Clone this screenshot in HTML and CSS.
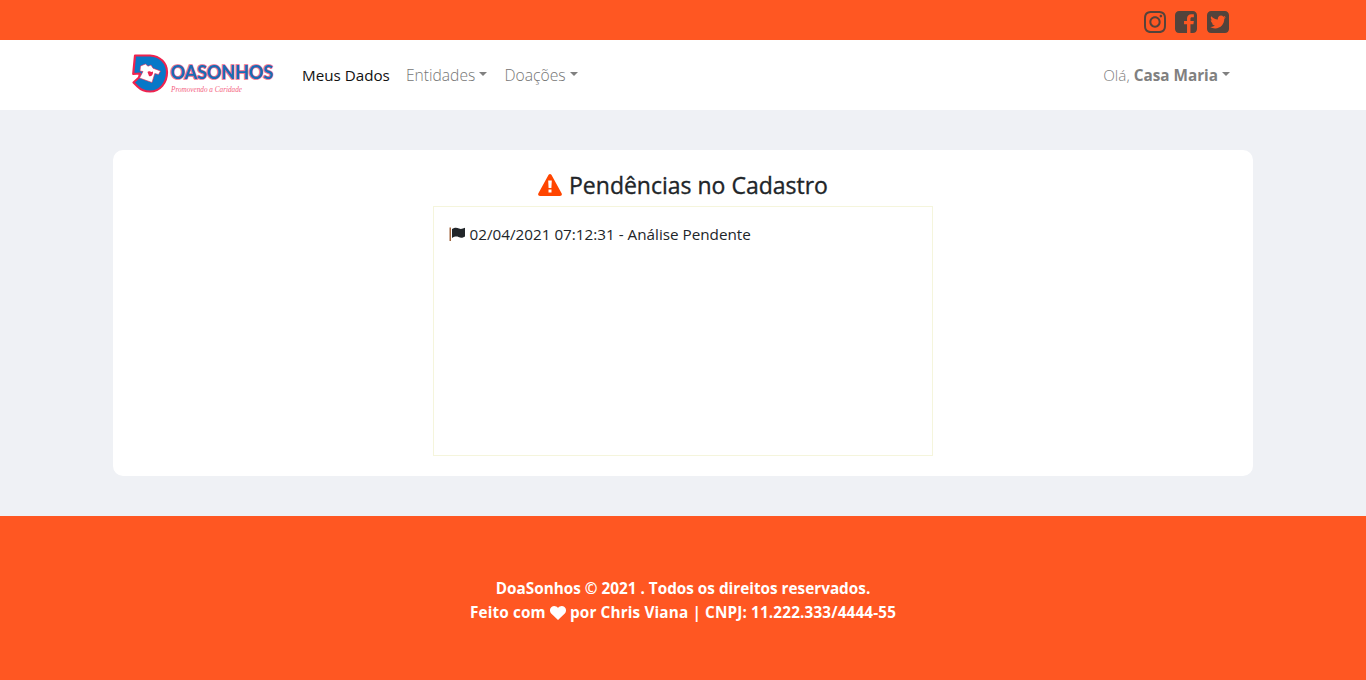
FILE: index.html
```html
<!DOCTYPE html>
<html lang="pt-BR">
<head>
<meta charset="utf-8">
<title>DoaSonhos</title>
<link rel="stylesheet" href="styles.css">
</head>
<body>
<div class="topbar">
  <div class="social">
    <svg viewBox="0 32 448 448"><path d="M224.1 141c-63.6 0-114.9 51.3-114.9 114.9s51.3 114.9 114.9 114.9S339 319.5 339 255.9 287.7 141 224.1 141zm0 189.6c-41.1 0-74.7-33.5-74.7-74.7s33.5-74.7 74.7-74.7 74.7 33.5 74.7 74.7-33.6 74.7-74.7 74.7zm146.4-194.3c0 14.9-12 26.8-26.8 26.8-14.9 0-26.8-12-26.8-26.8s12-26.8 26.8-26.8 26.8 12 26.8 26.8zm76.1 27.2c-1.7-35.9-9.9-67.7-36.2-93.9-26.2-26.2-58-34.4-93.9-36.2-37-2.1-147.9-2.1-184.9 0-35.8 1.7-67.6 9.9-93.9 36.1s-34.4 58-36.2 93.9c-2.1 37-2.1 147.9 0 184.9 1.7 35.9 9.9 67.7 36.2 93.9s58 34.4 93.9 36.2c37 2.1 147.9 2.1 184.9 0 35.9-1.7 67.7-9.9 93.9-36.2 26.2-26.2 34.4-58 36.2-93.9 2.1-37 2.1-147.8 0-184.8zM398.8 388c-7.8 19.6-22.9 34.7-42.6 42.6-29.5 11.7-99.5 9-132.1 9s-102.7 2.6-132.1-9c-19.6-7.8-34.7-22.9-42.6-42.6-11.7-29.5-9-99.5-9-132.1s-2.6-102.7 9-132.1c7.8-19.6 22.9-34.7 42.6-42.6 29.5-11.7 99.5-9 132.1-9s102.7-2.6 132.1 9c19.6 7.8 34.7 22.9 42.6 42.6 11.7 29.5 9 99.5 9 132.1s2.7 102.7-9 132.1z"/></svg>
    <svg viewBox="0 32 448 448"><path d="M448 116v280c0 46-38 84-84 84h-49.300V302.800h60.600l8.700-67.600h-69.300V192c0-19.600 5.400-32.900 33.500-32.900H384V98.700c-6.200-.8-27.400-2.700-52.200-2.700-51.600 0-87 31.500-87 89.400v49.900H184v67.600h60.900V480H84c-46 0-84-38-84-84V116c0-46 38-84 84-84h280c46 0 84 38 84 84z"/></svg>
    <svg viewBox="0 32 448 448"><path d="M364 32H84C38 32 0 70 0 116v280c0 46 38 84 84 84h280c46 0 84-38 84-84V116c0-46-38-84-84-84zm-12.900 158.800c.2 2.800.2 5.700.2 8.500 0 86.700-66 186.600-186.600 186.600-37.200 0-71.700-10.800-100.700-29.400 5.300.6 10.400.8 15.800.8 30.700 0 58.900-10.400 81.400-28-28.800-.6-53-19.500-61.300-45.500 10.100 1.500 19.200 1.500 29.600-1.200-30-6.100-52.500-32.500-52.500-64.400v-.8c8.700 4.900 18.900 7.900 29.600 8.300a65.400 65.400 0 0 1-29.200-54.600c0-12.200 3.200-23.400 8.900-33.100 32.300 39.800 80.800 65.800 135.200 68.600-9.300-44.500 24-80.600 64-80.600 18.900 0 35.900 7.900 47.900 20.700 14.800-2.800 29-8.300 41.600-15.800-4.900 15.200-15.200 28-28.800 36.100 13.200-1.400 26-5.100 37.800-10.200-8.900 13.100-20.100 24.700-32.900 34z"/></svg>
  </div>
</div>
<nav class="navbar">
  <svg class="logo" viewBox="0 0 150 50">
    <path class="mark" d="M5 6.500H20C30 7 37 14 37 23C37 34 30 42.500 20 42.500C15 42.500 11 41 7.500 37.500L3.500 33.500L9 28.500L10 24.500L3.200 25Z"/>
    <path class="shirt" d="M10.500 17L15.500 15L18 17.200L21 16L23 19.200L30.500 22L28.500 25.500L24.800 24.500L22 33.500L9.500 29L13 22.500L10 22Z"/>
    <path class="heart" d="M17.500 23C19.500 21 20.500 24 23 22.500C23.500 26.500 20.500 28 19 27Z"/>
    <text class="brand" x="40.500" y="30" textLength="102.500" lengthAdjust="spacingAndGlyphs">OASONHOS</text>
    <text class="slogan" x="41" y="43" textLength="71" lengthAdjust="spacingAndGlyphs">Promovendo a Caridade</text>
  </svg>
  <div class="links">
    <a class="active t-meus">Meus Dados</a>
    <a class="t-ent">Entidades<i class="caret"></i></a>
    <a class="t-doa">Doações<i class="caret"></i></a>
  </div>
  <a class="user"><span>Olá, <b>Casa Maria</b></span><i class="caret"></i></a>
</nav>
<main>
  <section class="card">
    <h1><svg class="warn" viewBox="0 0 24 22"><path fill-rule="evenodd" d="M10.600.800Q12-.8 13.400.800L23.700 19.500Q24.500 22 22 22H2Q-.5 22 .3 19.500ZM10.200 6.500L10.600 14H13.400L13.800 6.500ZM10.500 15.500V18.500H13.500V15.500Z"/></svg><span>Pendências no Cadastro</span></h1>
    <div class="pending">
      <svg class="flag" viewBox="0 0 16 14"><path class="pole" d="M.5.500H2V14H.500Z"/><path d="M3 2C6 0 8 .500 10 1.500C12 2.500 14 1.500 16 .800V9.500C13 11.300 11.500 10.800 9.500 10C7.500 9.200 5.500 9.500 3 11Z"/></svg><span>02/04/2021 07:12:31 - Análise Pendente</span>
    </div>
  </section>
</main>
<footer>
  <div class="f-one">DoaSonhos © 2021 . Todos os direitos reservados.</div>
  <div class="f-two">Feito com <svg class="love" viewBox="0 0 16 14"><path d="M8 14L1.200 7.400C-.6 5.500-.3 2.500 1.500 1C3.500-.6 6.300-.2 8 2C9.700-.2 12.500-.6 14.500 1C16.300 2.500 16.600 5.500 14.800 7.400Z"/></svg> por Chris Viana | CNPJ: 11.222.333/4444-55</div>
</footer>
</body>
</html>
```
FILE: styles.css
```css
* { box-sizing: border-box; }
body { margin: 0; height: 680px; display: flex; flex-direction: column; background: #eff1f5; color: #212529; font: 16px/24px "Open Sans", "Noto Sans", sans-serif; }
svg { display: block; }
.topbar { height: 40px; background: #ff5722; }
.social { width: 1140px; height: 44px; margin: 0 auto; padding-right: 24.500px; display: flex; justify-content: flex-end; align-items: center; gap: 9.500px; }
.social svg { width: 22px; height: 22px; fill: #54433b; }
.navbar { height: 70px; padding: 0 136px 0 130px; display: flex; align-items: center; background: #fff; }
.logo { width: 150px; height: 50px; margin-top: -2px; overflow: visible; }
.mark { fill: #0878c8; stroke: #ef234f; stroke-width: 2.200; stroke-linejoin: round; }
.shirt { fill: #fff; stroke: #ef234f; stroke-width: .6; }
.heart { fill: #ef234f; }
.brand { font: 700 18.500px Lato, sans-serif; fill: #176cb5; stroke: #ee6d8c; stroke-width: 1.700; paint-order: stroke; }
.slogan { font: italic 8px "Liberation Serif", serif; fill: #f4627f; }
.links { display: flex; margin-left: 22px; gap: 16px; color: #757575; font-weight: 300; }
.links a, .user { display: flex; align-items: center; white-space: nowrap; }
.links .active { color: #111; font-weight: 400; }
.t-meus { width: 88px; font-size: 15.200px; }
.t-ent { width: 82.500px; font-size: 15.600px; }
.t-doa { font-size: 15.700px; }
.caret { margin: -3px 0 0 4px; border: 4.900px solid transparent; border-top-color: #808080; border-bottom: 0; }
.user { margin-left: auto; color: #808080; font-size: 15.300px; font-weight: 300; }
.user b { font-weight: 700; }
main { padding: 40px 113px; }
.card { height: 326px; padding-top: 20px; display: flex; flex-direction: column; align-items: center; background: #fff; border-radius: 10px; }
h1 { height: 29px; margin: 0 0 7px; display: flex; align-items: center; gap: 7px; font-size: 23px; line-height: 29px; font-weight: 500; -webkit-text-stroke: .35px #212529; }
h1 span { margin-top: 2px; }
.warn { width: 24px; height: 22px; fill: #ff4500; }
.pending { width: 500px; height: 250px; padding: 15px; display: flex; align-items: flex-start; gap: 4.500px; border: 1px solid #f5f5dc; font-size: 15.250px; white-space: nowrap; }
.flag { width: 16px; height: 14px; margin-top: 5px; fill: #212529; }
.pole { fill: #a0643c; }
footer { flex: 1; padding-top: 60px; background: #ff5722; color: #fff; text-align: center; font-size: 15.300px; font-weight: 700; }
.f-two { letter-spacing: .14px; }
.love { display: inline-block; width: 16px; height: 14px; vertical-align: -2px; fill: #fff; }
```
